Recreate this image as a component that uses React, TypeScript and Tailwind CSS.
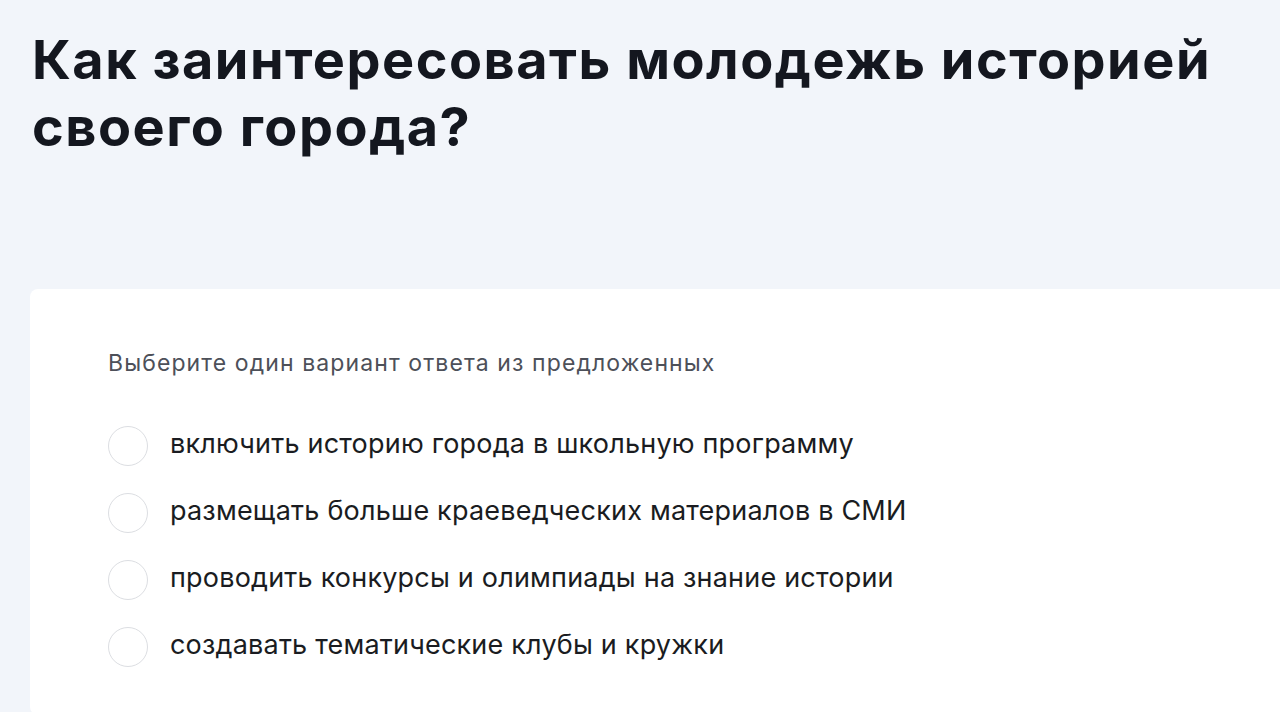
const options = [
  "включить историю города в школьную программу",
  "размещать больше краеведческих материалов в СМИ",
  "проводить конкурсы и олимпиады на знание истории",
  "создавать тематические клубы и кружки",
];

export default function App() {
  return (
    <div className="min-h-[712px] bg-[#f2f5fa] font-['Inter',sans-serif] overflow-hidden">
      <h1 className="pl-8 pt-[26px] text-[54px] leading-[67px] font-bold text-[#14171f] tracking-[1.5px]">
        Как заинтересовать молодежь историей
        <br />
        своего города?
      </h1>

      <div className="ml-[30px] mt-[129px] bg-white rounded-l-lg pl-[78px] pt-[58px] pb-12">
        <p className="text-[23px] leading-8 text-[#4d5059] tracking-[1.1px]">
          Выберите один вариант ответа из предложенных
        </p>
        <div className="mt-[47px] flex flex-col gap-[27px]">
          {options.map((o) => (
            <label key={o} className="flex items-center gap-[22px] cursor-pointer">
              <span className="w-10 h-10 rounded-full border border-[#dcdee2] bg-white shrink-0" />
              <span className="text-[27px] leading-10 text-[#1a1c21] tracking-[0.2px] -mt-1">{o}</span>
            </label>
          ))}
        </div>
      </div>
    </div>
  );
}
